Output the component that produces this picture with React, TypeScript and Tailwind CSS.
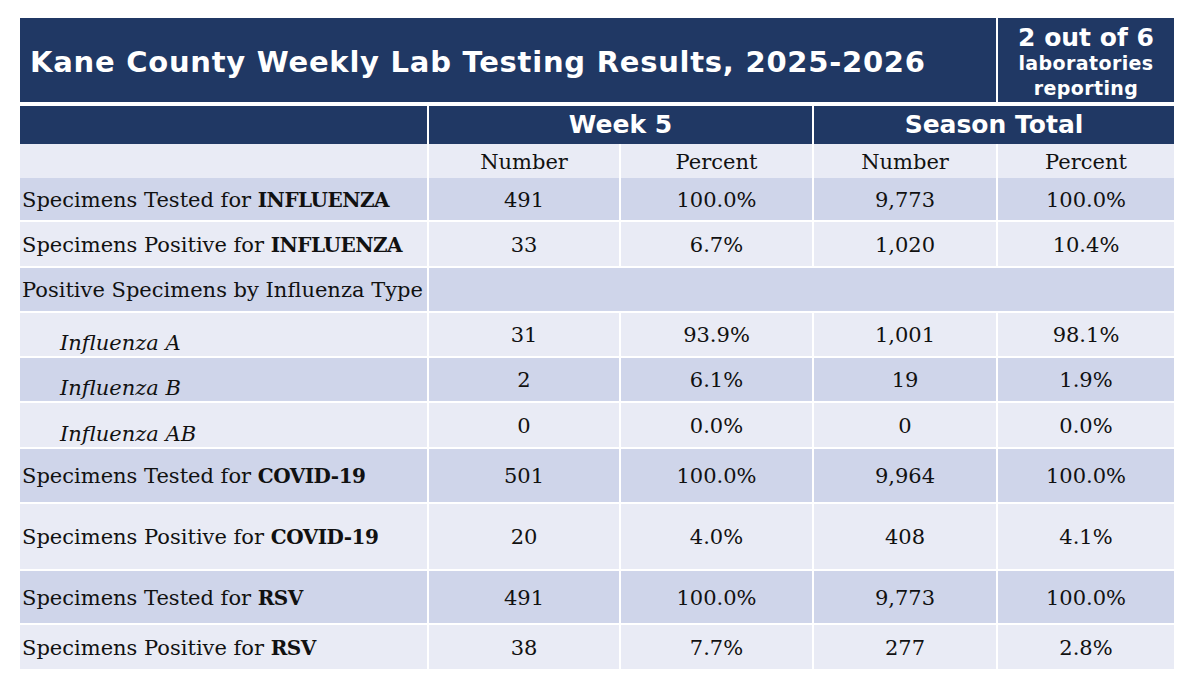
import React from "react";

type Row = {
  label: React.ReactNode;
  values?: string[];
  shade: "dark" | "light";
  h: string;
  italic?: boolean;
};

const cols = "grid grid-cols-[407px_190px_191px_182px_176px] gap-x-[2px]";

// bold disease name, tightened a little to match the reference width
const B = ({ children }: { children: React.ReactNode }) => (
  <b className="text-[20px] tracking-[-0.5px]">{children}</b>
);

const rows: Row[] = [
  {
    label: (
      <>
        Specimens Tested for <B>INFLUENZA</B>
      </>
    ),
    values: ["491", "100.0%", "9,773", "100.0%"],
    shade: "dark",
    h: "h-[42px]",
  },
  {
    label: (
      <>
        Specimens Positive for <B>INFLUENZA</B>
      </>
    ),
    values: ["33", "6.7%", "1,020", "10.4%"],
    shade: "light",
    h: "h-[44px]",
  },
  { label: "Positive Specimens by Influenza Type", shade: "dark", h: "h-[43px]" },
  { label: "Influenza A", values: ["31", "93.9%", "1,001", "98.1%"], shade: "light", h: "h-[43px]", italic: true },
  { label: "Influenza B", values: ["2", "6.1%", "19", "1.9%"], shade: "dark", h: "h-[43px]", italic: true },
  { label: "Influenza AB", values: ["0", "0.0%", "0", "0.0%"], shade: "light", h: "h-[44px]", italic: true },
  {
    label: (
      <>
        Specimens Tested for <B>COVID-19</B>
      </>
    ),
    values: ["501", "100.0%", "9,964", "100.0%"],
    shade: "dark",
    h: "h-[53px]",
  },
  {
    label: (
      <>
        Specimens Positive for <B>COVID-19</B>
      </>
    ),
    values: ["20", "4.0%", "408", "4.1%"],
    shade: "light",
    h: "h-[65px]",
  },
  {
    label: (
      <>
        Specimens Tested for <B>RSV</B>
      </>
    ),
    values: ["491", "100.0%", "9,773", "100.0%"],
    shade: "dark",
    h: "h-[52px]",
  },
  {
    label: (
      <>
        Specimens Positive for <B>RSV</B>
      </>
    ),
    values: ["38", "7.7%", "277", "2.8%"],
    shade: "light",
    h: "h-[44px]",
  },
];

const DataRow = ({ row }: { row: Row }) => {
  const bg = row.shade === "dark" ? "bg-[#cfd5ea]" : "bg-[#e9ebf5]";
  return (
    <div className={`${cols} mt-[2px] ${row.h}`}>
      <div
        className={`${bg} flex ${row.italic ? "items-end pl-[40px] italic leading-[26px]" : "items-center pl-[2px] pt-[3px]"}`}
      >
        <span>{row.label}</span>
      </div>
      {row.values ? (
        row.values.map((v, i) => (
          <div key={i} className={`${bg} flex items-center justify-center pt-[3px]`}>
            {v}
          </div>
        ))
      ) : (
        <div className={`${bg} col-span-4`} />
      )}
    </div>
  );
};

export default function App() {
  return (
    <div className="w-[1200px] h-[676px] bg-white pt-[18px] pl-[20px] font-['DejaVu_Serif',serif] text-[21px] text-[#111]">
      {/* title banner */}
      <div className="flex gap-x-[2px] h-[84px] w-[1154px] text-white font-['DejaVu_Sans',Verdana,sans-serif] font-bold">
        <div className="flex-1 bg-[#203864] flex items-center pl-[10px] pt-[5px] text-[29px] tracking-[0.75px]">
          Kane County Weekly Lab Testing Results, 2025-2026
        </div>
        <div className="w-[176px] bg-[#203864] flex flex-col items-center justify-center pt-[4px]">
          <span className="text-[25px] leading-[27px]">2 out of 6</span>
          <span className="text-[19px] leading-[25px] tracking-[0.4px]">laboratories</span>
          <span className="text-[19px] leading-[25px] tracking-[0.4px]">reporting</span>
        </div>
      </div>

      {/* group header */}
      <div className="grid grid-cols-[407px_383px_360px] gap-x-[2px] mt-[4px] h-[38px] text-white font-['DejaVu_Sans',Verdana,sans-serif] font-bold text-[25px]">
        <div className="bg-[#203864]" />
        <div className="bg-[#203864] flex items-center justify-center">Week 5</div>
        <div className="bg-[#203864] flex items-center justify-center">Season Total</div>
      </div>

      {/* sub header */}
      <div className={`${cols} h-[32px]`}>
        <div className="bg-[#e9ebf5]" />
        {["Number", "Percent", "Number", "Percent"].map((t, i) => (
          <div key={i} className="bg-[#e9ebf5] flex items-center justify-center pt-[3px]">
            {t}
          </div>
        ))}
      </div>

      {rows.map((r, i) => (
        <DataRow key={i} row={r} />
      ))}
    </div>
  );
}
